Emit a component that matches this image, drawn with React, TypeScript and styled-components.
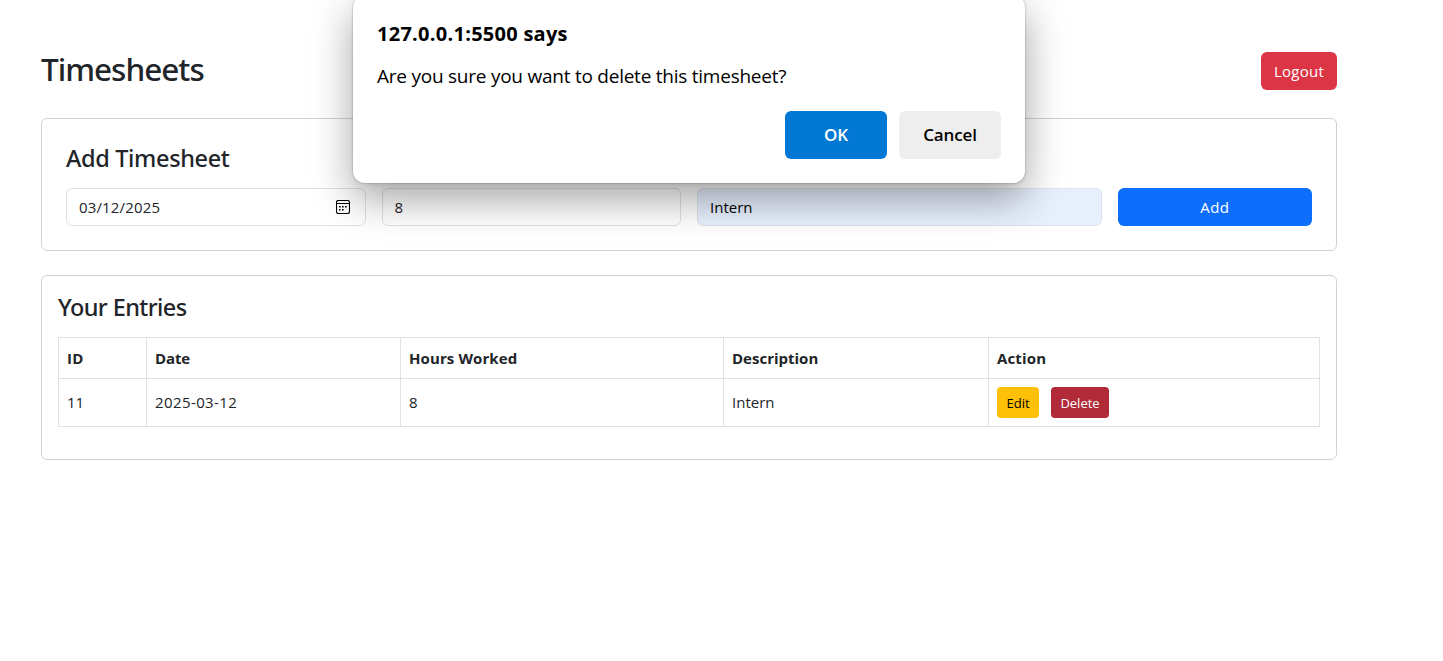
import React from "react";
import styled, { createGlobalStyle } from "styled-components";

const GlobalStyle = createGlobalStyle`
  *, *::before, *::after { box-sizing: border-box; }
  html, body { margin: 0; background: #fff; }
  body {
    font-family: "Segoe UI", "Open Sans", "Noto Sans", sans-serif;
    font-size: 15px;
    line-height: 24px;
    color: #212529;
    height: 661px;
    overflow: hidden;
  }
`;

const Page = styled.main`
  width: 1378px;
  padding: 52px 41px 0;
`;

const Header = styled.header`
  display: flex;
  justify-content: space-between;
  align-items: flex-start;
  height: 38px;
  margin-bottom: 28px;
`;

const Label = styled.span<{ $spacing?: number; $shift?: number }>`
  display: inline-block;
  white-space: nowrap;
  letter-spacing: ${(p) => p.$spacing ?? 0}px;
  transform: translateY(${(p) => p.$shift ?? 0}px);
`;

const PageTitle = styled.h1`
  margin: -2px 0 0;
  font-family: "Segoe UI", "Noto Sans", sans-serif;
  font-size: 31.5px;
  line-height: 38px;
  font-weight: 500;
`;

const Button = styled.button<{ $bg: string; $color?: string; $width?: number; $small?: boolean }>`
  display: flex;
  align-items: center;
  justify-content: center;
  border: 0;
  padding: 0;
  width: ${(p) => (p.$width ? `${p.$width}px` : "100%")};
  height: ${(p) => (p.$small ? 31 : 38)}px;
  border-radius: ${(p) => (p.$small ? 4 : 6)}px;
  background: ${(p) => p.$bg};
  color: ${(p) => p.$color ?? "#fff"};
  font-family: inherit;
  font-size: ${(p) => (p.$small ? 13 : 15)}px;
  line-height: 24px;
`;

const Card = styled.section<{ $pad: string; $height: number }>`
  height: ${(p) => p.$height}px;
  padding: ${(p) => p.$pad};
  border: 1px solid #d1d2d3;
  border-radius: 6px;
  margin-bottom: 24px;
`;

const SectionTitle = styled.h2`
  margin: 0;
  font-family: "Segoe UI", "Noto Sans", sans-serif;
  font-size: 23.5px;
  line-height: 29px;
  font-weight: 500;
`;

const Form = styled.div`
  display: grid;
  grid-template-columns: 299.5px 299.5px 404.67px 194.33px;
  gap: 16px;
  margin-top: 16px;
`;

const Field = styled.div<{ $filled?: boolean }>`
  display: flex;
  align-items: center;
  justify-content: space-between;
  height: 38px;
  padding: 0 15px 0 12px;
  border: 1px solid #dee2e6;
  border-radius: 6px;
  background: ${(p) => (p.$filled ? "#e8f0fe" : "#fff")};
  color: ${(p) => (p.$filled ? "#000" : "#212529")};
`;

const Table = styled.table`
  width: 1262px;
  margin-top: 15px;
  border-collapse: collapse;
  table-layout: fixed;
`;

const Cell = styled.td`
  border: 1px solid #dee2e6;
  padding: 8px;
  height: 48px;
  text-align: left;
  vertical-align: middle;
`;

const HeadCell = styled(Cell).attrs({ as: "th" })`
  height: 41px;
  font-weight: 700;
`;

const Actions = styled.div`
  display: flex;
  gap: 12px;
`;

const Dialog = styled.div`
  position: absolute;
  left: 353px;
  top: -5px;
  width: 672px;
  height: 188px;
  padding: 26px 24px 24px;
  border-radius: 12px;
  background: #fff;
  color: #000;
  box-shadow: 0 0 1px 1px rgba(0, 0, 0, 0.1), 0 2px 4px rgba(0, 0, 0, 0.06),
    0 16px 40px rgba(0, 0, 0, 0.36);
`;

const DialogTitle = styled.div`
  font-size: 20px;
  font-weight: 700;
  line-height: 26px;
`;

const DialogText = styled.div`
  margin-top: 16px;
  font-size: 19px;
  line-height: 26px;
`;

const DialogButtons = styled.div`
  display: flex;
  justify-content: flex-end;
  gap: 12px;
  margin-top: 22px;
`;

const DialogButton = styled.button<{ $primary?: boolean }>`
  width: 102px;
  height: 48px;
  padding: 0;
  border: 0;
  border-radius: 6px;
  background: ${(p) => (p.$primary ? "#0078d4" : "#eee")};
  color: ${(p) => (p.$primary ? "#fff" : "#000")};
  font-family: inherit;
  font-size: 17px;
  font-weight: 600;
`;

const CalendarIcon = () => (
  <svg width="14" height="14" viewBox="0 0 14 14" fill="none">
    <rect x="0.5" y="0.5" width="13" height="13" rx="2" stroke="#000" strokeWidth="1.1" />
    <path d="M0.5 3.5h13" stroke="#000" />
    <path
      d="M3 6h1.6v1.6H3zM6 6h1.6v1.6H6zM9 6h1.6v1.6H9zM3 9h1.6v1.6H3zM6 9h1.6v1.6H6z"
      fill="#000"
    />
  </svg>
);

const columns = [
  { name: "ID", width: 88, spacing: 0.4 },
  { name: "Date", width: 254, spacing: -0.1 },
  { name: "Hours Worked", width: 323, spacing: 0.1 },
  { name: "Description", width: 265, spacing: 0 },
  { name: "Action", width: 331, spacing: 0.15 },
];

export default function App() {
  return (
    <>
      <GlobalStyle />
      <Page>
        <Header>
          <PageTitle><Label $spacing={-1}>Timesheets</Label></PageTitle>
          <Button $bg="#dc3545" $width={76}><Label $spacing={0.25}>Logout</Label></Button>
        </Header>
        <Card $height={133} $pad="24px">
          <SectionTitle><Label $spacing={-0.35} $shift={1}>Add Timesheet</Label></SectionTitle>
          <Form>
            <Field><Label $spacing={0.15}>03/12/2025</Label><CalendarIcon /></Field>
            <Field><Label>8</Label></Field>
            <Field $filled><Label>Intern</Label></Field>
            <Button $bg="#0d6efd"><Label $spacing={0.4}>Add</Label></Button>
          </Form>
        </Card>
        <Card $height={185} $pad="17px 16px">
          <SectionTitle><Label $spacing={-0.6}>Your Entries</Label></SectionTitle>
          <Table>
            <colgroup>
              {columns.map((c) => <col key={c.name} width={c.width} />)}
            </colgroup>
            <thead>
              <tr>
                {columns.map((c) => (
                  <HeadCell key={c.name}><Label $spacing={c.spacing}>{c.name}</Label></HeadCell>
                ))}
              </tr>
            </thead>
            <tbody>
              <tr>
                <Cell><Label $shift={-1}>11</Label></Cell>
                <Cell><Label $shift={-1} $spacing={0.4}>2025-03-12</Label></Cell>
                <Cell><Label $shift={-1}>8</Label></Cell>
                <Cell><Label $shift={-1}>Intern</Label></Cell>
                <Cell>
                  <Actions>
                    <Button $small $bg="#ffc107" $color="#000" $width={42}><Label>Edit</Label></Button>
                    <Button $small $bg="#b02a37" $width={58}><Label>Delete</Label></Button>
                  </Actions>
                </Cell>
              </tr>
            </tbody>
          </Table>
        </Card>
      </Page>
      <Dialog role="alertdialog">
        <DialogTitle><Label $spacing={0.27}>127.0.0.1:5500 says</Label></DialogTitle>
        <DialogText><Label $spacing={-0.24}>Are you sure you want to delete this timesheet?</Label></DialogText>
        <DialogButtons>
          <DialogButton $primary><Label $shift={-1}>OK</Label></DialogButton>
          <DialogButton><Label $shift={-1} $spacing={-0.15}>Cancel</Label></DialogButton>
        </DialogButtons>
      </Dialog>
    </>
  );
}
